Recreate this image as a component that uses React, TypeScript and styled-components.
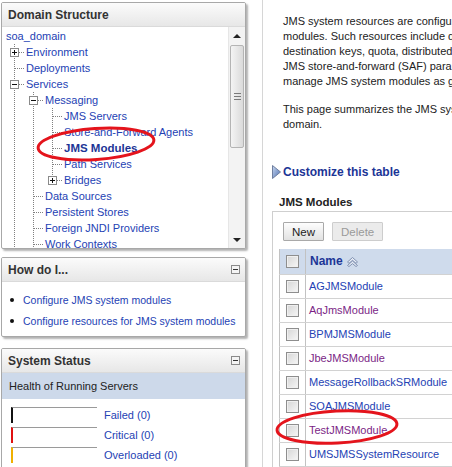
import React from 'react';
import styled, { createGlobalStyle, css } from 'styled-components';

const Global = createGlobalStyle`
  html, body { margin: 0; padding: 0; background: #fff; }
  body { font-family: "Liberation Sans", Arial, sans-serif; font-size: 11px; color: #222; overflow: hidden; }
  * { box-sizing: border-box; }
`;

const Page = styled.div`
  position: relative;
  display: grid;
  grid-template-columns: 262px 1fr;
  width: 452px;
  height: 467px;
  overflow: hidden;
`;

const LeftColumn = styled.div`
  display: flex;
  flex-direction: column;
  padding: 2px 0 0 1px;
`;

const Panel = styled.section<{ $h: number; $mt?: number }>`
  width: 245px;
  height: ${p => p.$h}px;
  margin-top: ${p => p.$mt ?? 0}px;
  border: 1px solid #a8a8a8;
  border-radius: 2px;
  box-shadow: 2px 2px 2px rgba(0, 0, 0, 0.3);
  background: #fff;
  overflow: hidden;
  display: flex;
  flex-direction: column;
  flex-shrink: 0;
`;

const PanelHeader = styled.header`
  height: 24px;
  flex-shrink: 0;
  display: flex;
  align-items: center;
  justify-content: space-between;
  padding: 0 5px 0 6px;
  background: linear-gradient(#fbfbfb, #e7e7e7);
  border-bottom: 1px solid #dadada;
  font-weight: bold;
  font-size: 12px;
  color: #333;
`;

const Collapse = styled.span`
  position: relative;
  width: 9px;
  height: 9px;
  border: 1px solid #8a8a8a;
  background: #f4f4f4;
  &::after {
    content: '';
    position: absolute;
    left: 1px;
    right: 1px;
    top: 3px;
    height: 1px;
    background: #333;
  }
`;

/* ---------- Tree ---------- */

const TreeBody = styled.div`
  flex: 1;
  display: flex;
  min-height: 0;
`;

const TreeContent = styled.div`
  flex: 1;
  overflow: hidden;
  padding: 1px 0 0 3px;
`;

const TreeRow = styled.div`
  display: flex;
  height: 16px;
  line-height: 16px;
  white-space: nowrap;
`;

type Seg = 'pipe' | 'tee' | 'last';

const vline = css`
  content: '';
  position: absolute;
  left: 9px;
  top: 0;
  width: 1px;
  background: repeating-linear-gradient(to bottom, #808080 0 1px, transparent 1px 2px);
`;

const Cell = styled.span<{ $seg: Seg }>`
  position: relative;
  width: 19px;
  height: 16px;
  flex-shrink: 0;
  &::before {
    ${vline};
    height: ${p => (p.$seg === 'last' ? '8px' : '16px')};
  }
  ${p =>
    p.$seg !== 'pipe' &&
    css`
      &::after {
        content: '';
        position: absolute;
        left: 10px;
        top: 8px;
        width: 10px;
        height: 1px;
        background: repeating-linear-gradient(to right, #808080 0 1px, transparent 1px 2px);
      }
    `}
`;

const Expander = styled.span<{ $open: boolean }>`
  position: absolute;
  z-index: 1;
  left: 5px;
  top: 4px;
  width: 9px;
  height: 9px;
  border: 1px solid #8a8a8a;
  background: #fff;
  &::before {
    content: '';
    position: absolute;
    left: 1px;
    right: 1px;
    top: 3px;
    height: 1px;
    background: #111;
  }
  ${p =>
    !p.$open &&
    css`
      &::after {
        content: '';
        position: absolute;
        top: 1px;
        bottom: 1px;
        left: 3px;
        width: 1px;
        background: #111;
      }
    `}
`;

const TreeLabel = styled.span<{ $bold?: boolean; $root?: boolean }>`
  margin-left: ${p => (p.$root ? '1px' : '2px')};
  color: ${p => (p.$bold ? '#1c3596' : '#2442b4')};
  font-weight: ${p => (p.$bold ? 'bold' : 'normal')};
  font-size: ${p => (p.$bold ? '11.5px' : '11px')};
`;

const Scrollbar = styled.div`
  width: 17px;
  flex-shrink: 0;
  display: flex;
  flex-direction: column;
  background: #f3f3f3;
  border-left: 1px solid #e6e6e6;
`;

const ArrowBtn = styled.div<{ $down?: boolean }>`
  height: 17px;
  display: flex;
  align-items: center;
  justify-content: center;
  &::before {
    content: '';
    width: 0;
    height: 0;
    border-left: 4px solid transparent;
    border-right: 4px solid transparent;
    ${p => (p.$down ? 'border-top: 4px solid #222;' : 'border-bottom: 4px solid #222;')}
  }
`;

const Thumb = styled.div`
  margin: 1px 1px 0 1px;
  height: 103px;
  border: 1px solid #b4b4b4;
  border-radius: 2px;
  background: linear-gradient(to right, #f4f4f4, #dadada);
  display: flex;
  align-items: center;
  justify-content: center;
`;

const Grip = styled.span`
  width: 7px;
  height: 7px;
  background: repeating-linear-gradient(to bottom, #7a7a7a 0 1px, transparent 1px 3px);
`;

const Track = styled.div`
  flex: 1;
`;

/* ---------- How do I ---------- */

const HowList = styled.ul`
  margin: 0;
  padding: 10px 0 0 8px;
  list-style: none;
  display: flex;
  flex-direction: column;
  gap: 5px;
`;

const HowItem = styled.li`
  display: flex;
  align-items: center;
  height: 16px;
  font-size: 10.5px;
  color: #2442b4;
  white-space: nowrap;
  &::before {
    content: '';
    width: 4px;
    height: 4px;
    border-radius: 50%;
    background: #111;
    margin-right: 9px;
  }
`;

/* ---------- System status ---------- */

const Band = styled.div`
  height: 26px;
  flex-shrink: 0;
  display: flex;
  align-items: center;
  padding-left: 7px;
  background: #cdd9ea;
  font-size: 11px;
  color: #222;
`;

const StatusList = styled.div`
  display: flex;
  flex-direction: column;
  gap: 4px;
  padding: 8px 0 0 9px;
`;

const StatusRow = styled.div`
  display: flex;
  align-items: center;
  height: 16px;
`;

const StatusBar = styled.span<{ $color: string }>`
  width: 86px;
  height: 16px;
  border-top: 1px solid #9a9a9a;
  border-left: 2px solid ${p => p.$color};
`;

const StatusLabel = styled.span`
  margin-left: 7px;
  color: #2442b4;
  font-size: 11px;
`;

/* ---------- Right column ---------- */

const RightColumn = styled.main`
  border-left: 1px solid #d6d6d6;
  padding: 14px 0 0 9px;
  display: flex;
  flex-direction: column;
  min-width: 0;
  overflow: hidden;
`;

const Para = styled.p<{ $mt?: number }>`
  margin: ${p => p.$mt ?? 0}px 0 0 11px;
  font-size: 11px;
  line-height: 15px;
  color: #222;
`;

const Line = styled.span`
  display: block;
  white-space: nowrap;
`;

const Customize = styled.div`
  margin-top: 32px;
  display: flex;
  align-items: center;
  gap: 2px;
  height: 16px;
  font-weight: bold;
  font-size: 12px;
  color: #1c3596;
  white-space: nowrap;
`;

const SectionTitle = styled.h3`
  margin: 14px 0 0 7px;
  height: 16px;
  line-height: 16px;
  font-size: 11.5px;
  font-weight: bold;
  color: #222;
  white-space: nowrap;
`;

const TableBox = styled.div`
  margin-top: 1px;
  border-top: 1px solid #cfcfcf;
  border-left: 1px solid #cfcfcf;
  padding: 10px 0 0 6px;
  flex: 1;
`;

const Toolbar = styled.div`
  display: flex;
  gap: 8px;
  padding-left: 4px;
  margin-bottom: 8px;
`;

const Btn = styled.button<{ $disabled?: boolean }>`
  height: 19px;
  padding: 0 8px;
  font-family: inherit;
  font-size: 11.5px;
  border-radius: 1px;
  ${p =>
    p.$disabled
      ? css`
          color: #9a9a9a;
          border: 1px solid #cdcdcd;
          background: #ebebeb;
        `
      : css`
          color: #222;
          border: 1px solid #a9a9a9;
          background: linear-gradient(#fdfdfd, #e2e2e2);
        `}
`;

const Table = styled.table`
  border-collapse: collapse;
  width: 300px;
  font-size: 11px;
  white-space: nowrap;
`;

const HeadRow = styled.tr`
  height: 25px;
  background: #cfdbec;
`;

const CheckCell = styled.td`
  width: 26px;
  padding: 0;
  border-left: 1px solid #c2c2c2;
  border-right: 1px solid #c2c2c2;
  border-bottom: 1px solid #d2d2d2;
  text-align: center;
  vertical-align: middle;
`;

const NameHead = styled.th`
  text-align: left;
  padding: 0 0 0 4px;
  font-size: 12px;
  font-weight: bold;
  color: #1c3596;
  border-bottom: 1px solid #d2d2d2;
`;

const BodyRow = styled.tr`
  height: 24px;
`;

const NameCell = styled.td<{ $visited?: boolean }>`
  padding: 0 0 0 3px;
  color: ${p => (p.$visited ? '#7b1f86' : '#2442b4')};
  border-bottom: 1px solid #d2d2d2;
`;

const Check = styled.span`
  display: inline-block;
  vertical-align: middle;
  width: 13px;
  height: 13px;
  border: 1px solid #8e8e8e;
  background: linear-gradient(135deg, #d6d6d6, #f7f7f7);
  box-shadow: inset 0 0 0 1px #f0f0f0;
`;

const Overlay = styled.svg`
  position: absolute;
  left: 0;
  top: 0;
  pointer-events: none;
`;

const HeadInner = styled.span`
  display: inline-flex;
  align-items: center;
  gap: 3px;
`;

type Node = { label: string; segs: Seg[]; exp?: 'open' | 'closed'; bold?: boolean };

const tree: Node[] = [
  { label: 'Environment', segs: ['tee'], exp: 'closed' },
  { label: 'Deployments', segs: ['tee'] },
  { label: 'Services', segs: ['tee'], exp: 'open' },
  { label: 'Messaging', segs: ['pipe', 'tee'], exp: 'open' },
  { label: 'JMS Servers', segs: ['pipe', 'pipe', 'tee'] },
  { label: 'Store-and-Forward Agents', segs: ['pipe', 'pipe', 'tee'] },
  { label: 'JMS Modules', segs: ['pipe', 'pipe', 'tee'], bold: true },
  { label: 'Path Services', segs: ['pipe', 'pipe', 'tee'] },
  { label: 'Bridges', segs: ['pipe', 'pipe', 'last'], exp: 'closed' },
  { label: 'Data Sources', segs: ['pipe', 'tee'] },
  { label: 'Persistent Stores', segs: ['pipe', 'tee'] },
  { label: 'Foreign JNDI Providers', segs: ['pipe', 'tee'] },
  { label: 'Work Contexts', segs: ['pipe', 'tee'] },
];

const modules: { name: string; visited?: boolean }[] = [
  { name: 'AGJMSModule' },
  { name: 'AqJmsModule', visited: true },
  { name: 'BPMJMSModule' },
  { name: 'JbeJMSModule', visited: true },
  { name: 'MessageRollbackSRModule' },
  { name: 'SOAJMSModule' },
  { name: 'TestJMSModule', visited: true },
  { name: 'UMSJMSSystemResource' },
];

const statuses = [
  { label: 'Failed (0)', color: '#111' },
  { label: 'Critical (0)', color: '#e01010' },
  { label: 'Overloaded (0)', color: '#f0b000' },
];

const intro = [
  'JMS system resources are configured and stored as modules similar to standard Java EE',
  'modules. Such resources include queues, topics, connection factories, templates,',
  'destination keys, quota, distributed queues, distributed topics, foreign servers, and',
  'JMS store-and-forward (SAF) parameters. You can administratively configure and',
  'manage JMS system modules as global system resources.',
];

const summary = [
  'This page summarizes the JMS system modules that have been created in this WebLogic Server',
  'domain.',
];

export default function App() {
  return (
    <>
      <Global />
      <Page>
        <LeftColumn>
          <Panel $h={247}>
            <PanelHeader>Domain Structure</PanelHeader>
            <TreeBody>
              <TreeContent>
                <TreeRow>
                  <TreeLabel $root>soa_domain</TreeLabel>
                </TreeRow>
                {tree.map(n => (
                  <TreeRow key={n.label}>
                    {n.segs.map((s, i) => (
                      <Cell key={i} $seg={s}>
                        {i === n.segs.length - 1 && n.exp && <Expander $open={n.exp === 'open'} />}
                      </Cell>
                    ))}
                    <TreeLabel $bold={n.bold}>{n.label}</TreeLabel>
                  </TreeRow>
                ))}
              </TreeContent>
              <Scrollbar>
                <ArrowBtn />
                <Thumb>
                  <Grip />
                </Thumb>
                <Track />
                <ArrowBtn $down />
              </Scrollbar>
            </TreeBody>
          </Panel>

          <Panel $h={80} $mt={8}>
            <PanelHeader>
              How do I...
              <Collapse />
            </PanelHeader>
            <HowList>
              <HowItem>Configure JMS system modules</HowItem>
              <HowItem>Configure resources for JMS system modules</HowItem>
            </HowList>
          </Panel>

          <Panel $h={130} $mt={11}>
            <PanelHeader>
              System Status
              <Collapse />
            </PanelHeader>
            <Band>Health of Running Servers</Band>
            <StatusList>
              {statuses.map(s => (
                <StatusRow key={s.label}>
                  <StatusBar $color={s.color} />
                  <StatusLabel>{s.label}</StatusLabel>
                </StatusRow>
              ))}
            </StatusList>
          </Panel>
        </LeftColumn>

        <RightColumn>
          <Para>
            {intro.map(l => (
              <Line key={l}>{l}</Line>
            ))}
          </Para>
          <Para $mt={13}>
            {summary.map(l => (
              <Line key={l}>{l}</Line>
            ))}
          </Para>
          <Customize>
            <svg width="9" height="14" viewBox="0 0 9 14">
              <defs>
                <linearGradient id="tri" x1="0" y1="0" x2="1" y2="1">
                  <stop offset="0" stopColor="#c8d8f0" />
                  <stop offset="1" stopColor="#4f6fb0" />
                </linearGradient>
              </defs>
              <path d="M0.5 0.5 L8.5 7 L0.5 13.5 Z" fill="url(#tri)" stroke="#6f7f9f" strokeWidth="1" />
            </svg>
            Customize this table
          </Customize>
          <SectionTitle>JMS Modules</SectionTitle>
          <TableBox>
            <Toolbar>
              <Btn>New</Btn>
              <Btn $disabled>Delete</Btn>
            </Toolbar>
            <Table>
              <thead>
                <HeadRow>
                  <CheckCell as="th">
                    <Check />
                  </CheckCell>
                  <NameHead>
                    <HeadInner>
                      Name
                      <svg width="13" height="11" viewBox="0 0 13 11">
                        <path d="M1.5 6 L6.5 1.5 L11.5 6 L10 7.3 L6.5 4.3 L3 7.3 Z" fill="#e8eef8" stroke="#8090b0" strokeWidth="1" strokeLinejoin="round" />
                        <path d="M1.5 9.5 L6.5 5 L11.5 9.5 L10 10.5 L6.5 7.6 L3 10.5 Z" fill="#e8eef8" stroke="#8090b0" strokeWidth="1" strokeLinejoin="round" />
                      </svg>
                    </HeadInner>
                  </NameHead>
                </HeadRow>
              </thead>
              <tbody>
                {modules.map(m => (
                  <BodyRow key={m.name}>
                    <CheckCell>
                      <Check />
                    </CheckCell>
                    <NameCell $visited={m.visited}>{m.name}</NameCell>
                  </BodyRow>
                ))}
              </tbody>
            </Table>
          </TableBox>
        </RightColumn>

        <Overlay width="452" height="467" viewBox="0 0 452 467">
          <ellipse cx="96" cy="144" rx="58" ry="15.5" transform="rotate(-4 96 144)" fill="none" stroke="#e4141c" strokeWidth="3" />
          <ellipse cx="337" cy="427" rx="60" ry="16" transform="rotate(-3 337 427)" fill="none" stroke="#e4141c" strokeWidth="3" />
        </Overlay>
      </Page>
    </>
  );
}
